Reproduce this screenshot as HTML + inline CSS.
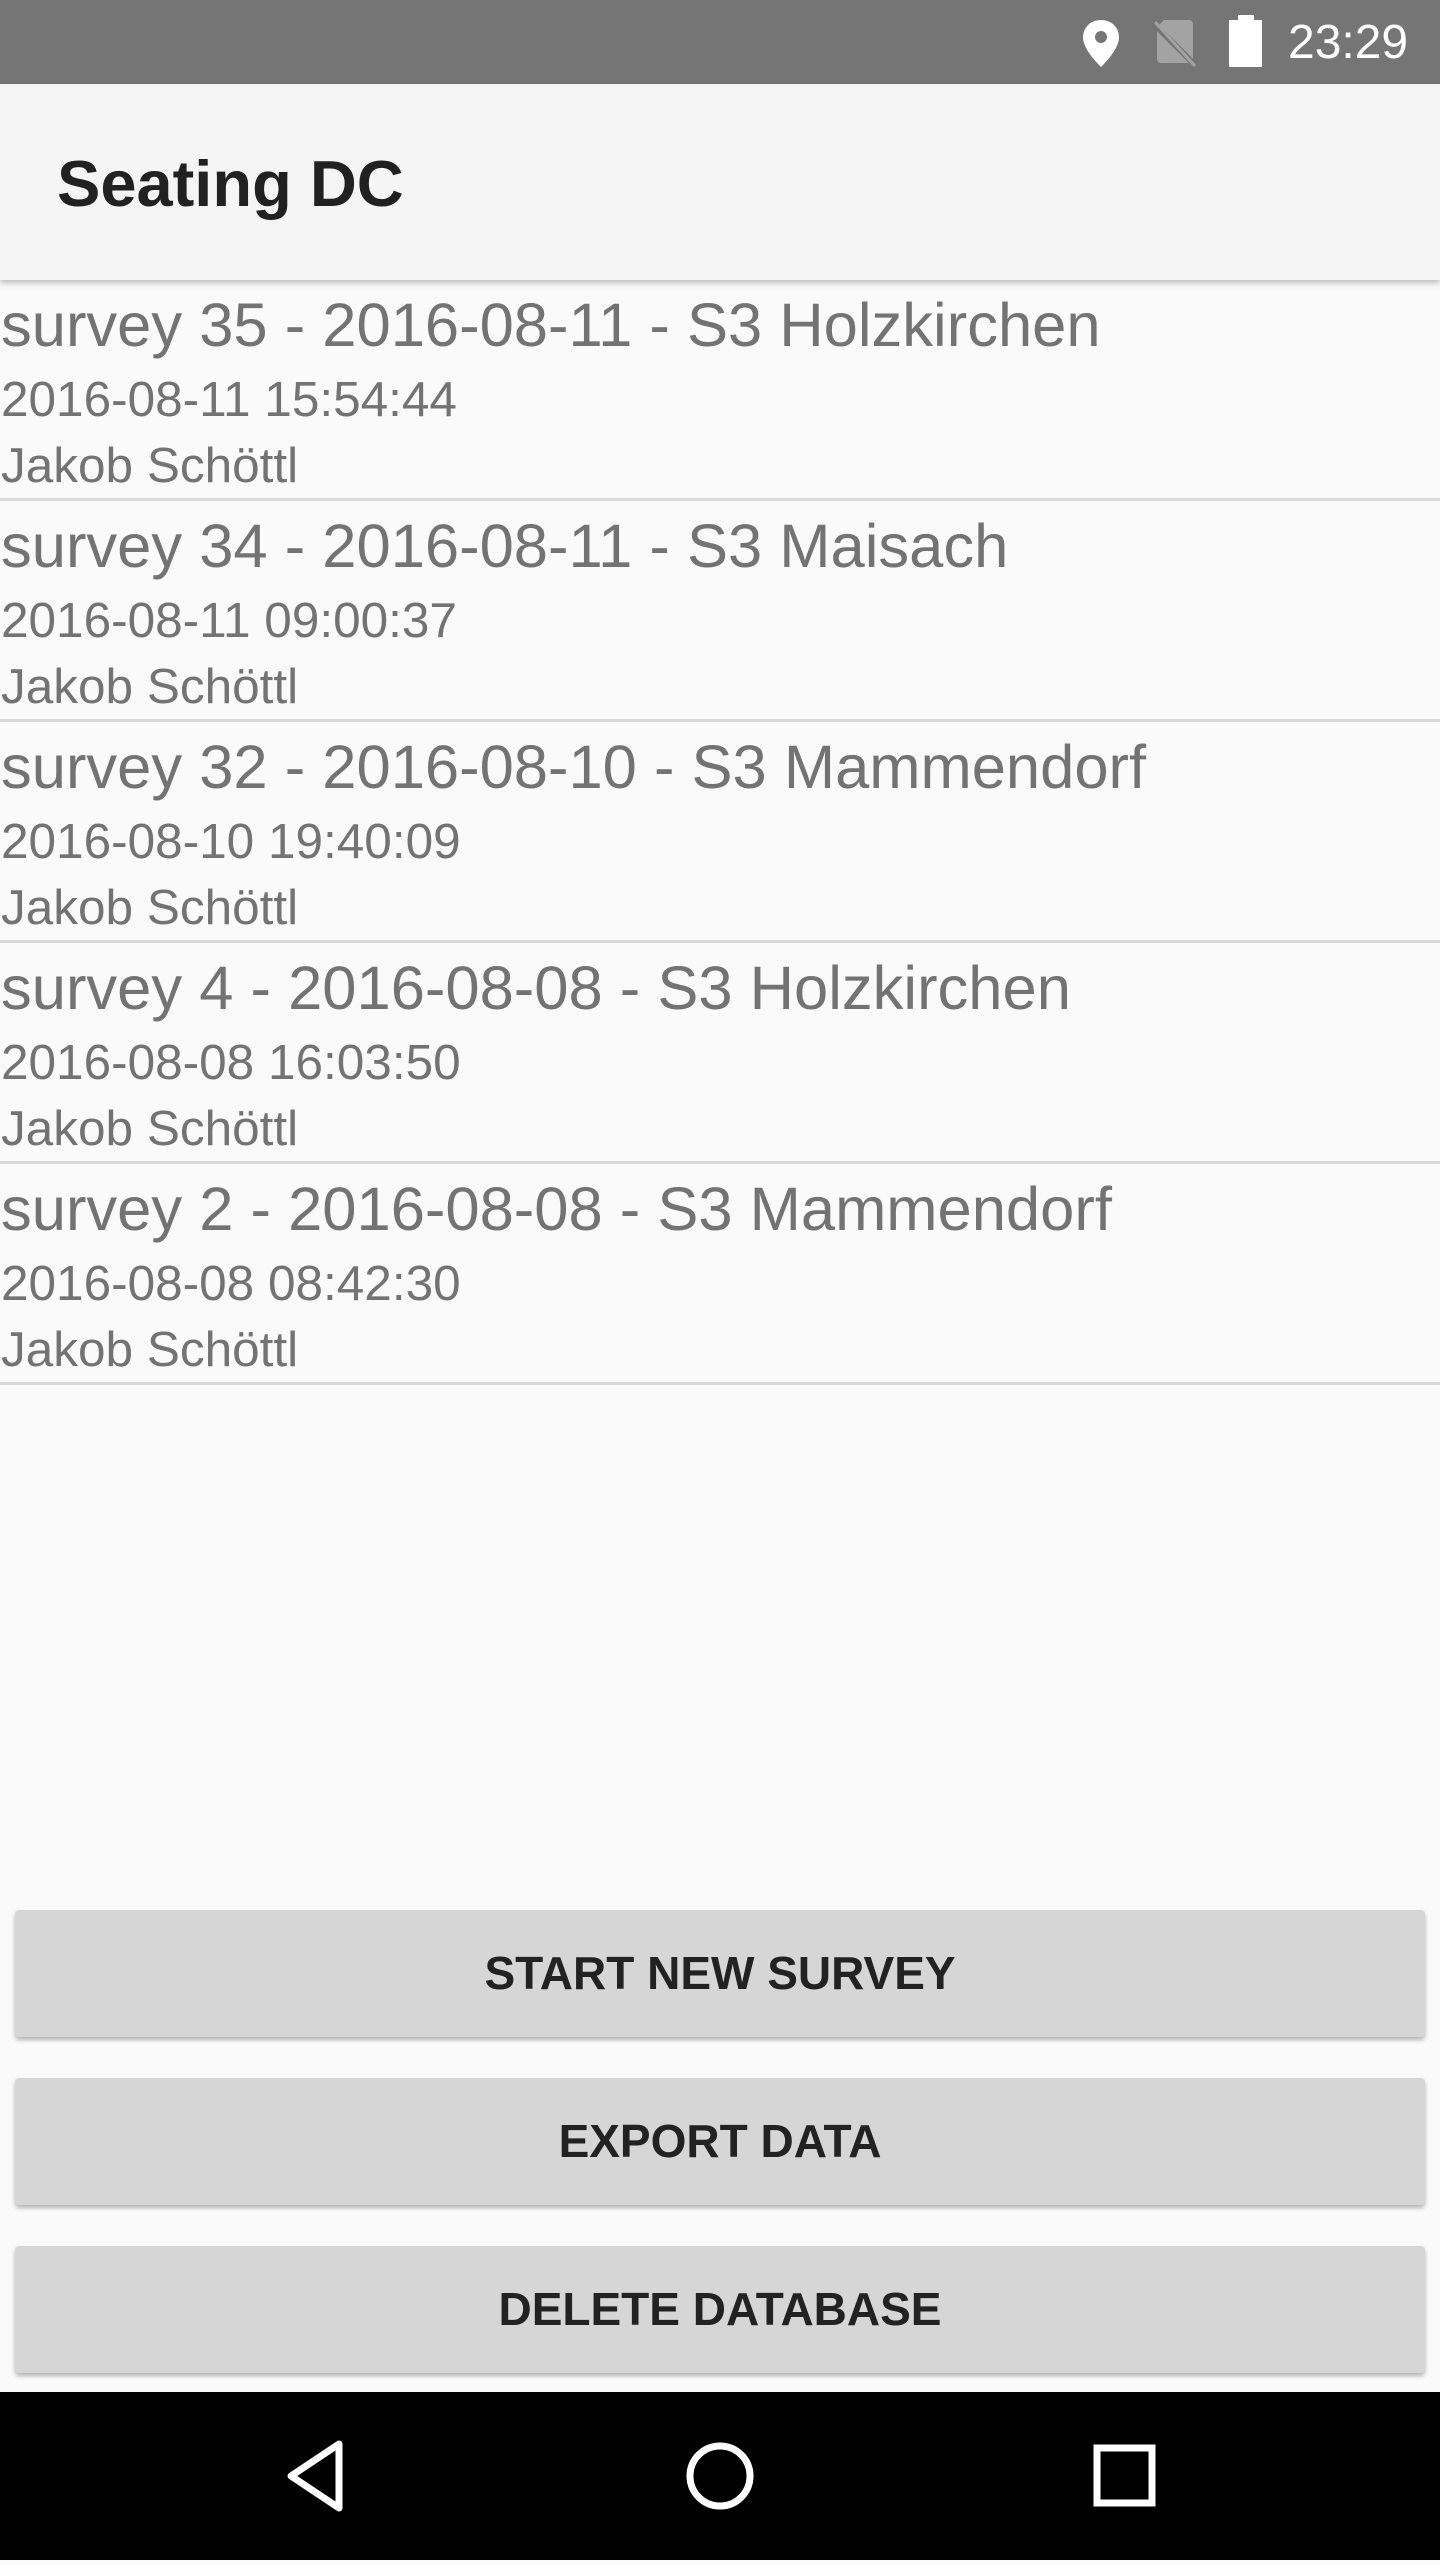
<!DOCTYPE html>
<html><head><style>
body{margin:0;width:1440px;height:2560px;background:#fafafa;font-family:"Liberation Sans",sans-serif;position:relative;overflow:hidden}
.sb{position:absolute;top:0;left:0;width:1440px;height:84px;background:#757575}
.ab{position:absolute;top:84px;left:0;width:1440px;height:196px;background:#f5f5f5;box-shadow:0 3px 6px rgba(0,0,0,.25)}
.ab span{position:absolute;left:57px;top:62px;font-size:65px;color:#212121;font-weight:bold;letter-spacing:0}
.it{position:absolute;left:0;width:1440px;height:221px;border-bottom:3px solid #d9d9d9;box-sizing:border-box;color:#737373}
.t{position:absolute;left:1px;top:10px;font-size:61.5px;white-space:nowrap}
.d{position:absolute;left:1px;top:91px;font-size:49.5px;white-space:nowrap}
.n{position:absolute;left:1px;top:157px;font-size:49.5px;white-space:nowrap}
.bt{position:absolute;left:15px;width:1410px;height:127px;background:#d6d6d6;border-radius:4px;box-shadow:0 3px 4px rgba(0,0,0,.28);text-align:center;line-height:127px;font-size:46px;color:#222;font-weight:bold}
.nav{position:absolute;top:2392px;left:0;width:1440px;height:168px;background:#000}
</style></head><body>
<div class="sb">
<svg width="1440" height="84" style="position:absolute;left:0;top:0">
<path d="M1101 20c-10.5 0-18 7.5-18 17.5 0 12.5 18 29.5 18 29.5s18-17 18-29.5c0-10-7.5-17.5-18-17.5z" fill="#fff"/>
<circle cx="1101" cy="37" r="6" fill="#757575"/>
<path d="M1164 20h25a4 4 0 0 1 4 4v35a4 4 0 0 1-4 4h-28a4 4 0 0 1-4-4v-32z" fill="#a3a3a3"/>
<line x1="1153" y1="23" x2="1196" y2="66" stroke="#757575" stroke-width="6"/>
<line x1="1155" y1="22" x2="1195" y2="66" stroke="#a3a3a3" stroke-width="3"/>
<rect x="1238" y="15" width="16" height="6" fill="#fff"/>
<rect x="1229" y="20" width="33" height="47" fill="#fff"/>
<text x="1288" y="58" font-size="48" fill="#fff" font-family="Liberation Sans">23:29</text>
</svg></div>
<div class="ab"><span>Seating DC</span></div>
<div class="it" style="top:280px"><div class="t">survey 35 - 2016-08-11 - S3 Holzkirchen</div><div class="d">2016-08-11 15:54:44</div><div class="n">Jakob Schöttl</div></div>
<div class="it" style="top:501px"><div class="t">survey 34 - 2016-08-11 - S3 Maisach</div><div class="d">2016-08-11 09:00:37</div><div class="n">Jakob Schöttl</div></div>
<div class="it" style="top:722px"><div class="t">survey 32 - 2016-08-10 - S3 Mammendorf</div><div class="d">2016-08-10 19:40:09</div><div class="n">Jakob Schöttl</div></div>
<div class="it" style="top:943px"><div class="t">survey 4 - 2016-08-08 - S3 Holzkirchen</div><div class="d">2016-08-08 16:03:50</div><div class="n">Jakob Schöttl</div></div>
<div class="it" style="top:1164px"><div class="t">survey 2 - 2016-08-08 - S3 Mammendorf</div><div class="d">2016-08-08 08:42:30</div><div class="n">Jakob Schöttl</div></div>
<div class="bt" style="top:1910px">START NEW SURVEY</div>
<div class="bt" style="top:2078px">EXPORT DATA</div>
<div class="bt" style="top:2246px">DELETE DATABASE</div>
<div class="nav"><svg width="1440" height="168">
<path d="M339 52 L291 84 L339 116 Z" fill="none" stroke="#fff" stroke-width="7" stroke-linejoin="round"/>
<circle cx="720" cy="84" r="30" fill="none" stroke="#fff" stroke-width="7"/>
<rect x="1097" y="56" width="55" height="55" fill="none" stroke="#fff" stroke-width="7"/>
</svg></div>
</body></html>
